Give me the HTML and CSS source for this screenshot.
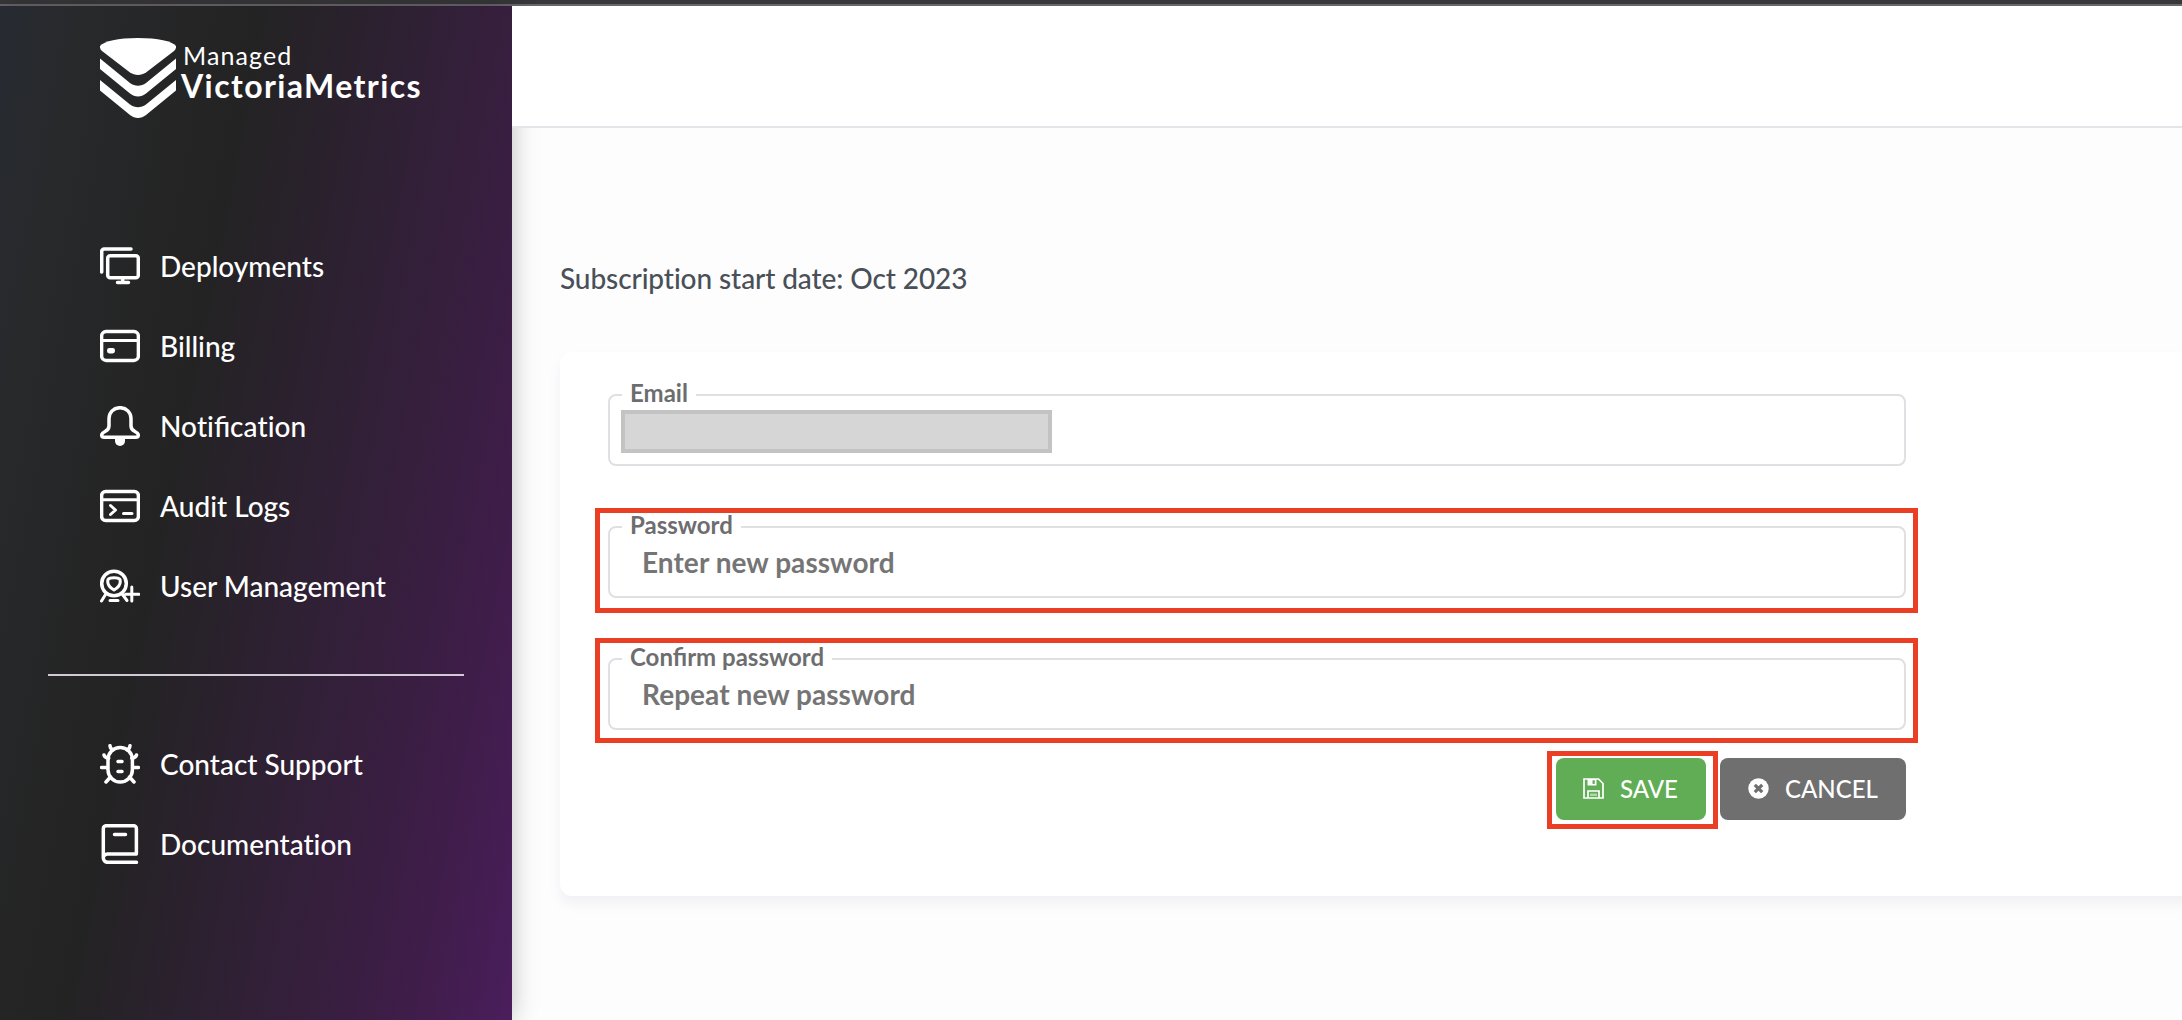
FILE: index.html
```html
<!DOCTYPE html>
<html lang="en">
<head>
<meta charset="utf-8">
<title>Managed VictoriaMetrics</title>
<link rel="stylesheet" href="styles.css">
</head>
<body>
<div class="window-edge"></div>
<div class="app">
  <aside class="sidebar">
    <div class="brand">
      <svg class="brand-mark" viewBox="0 0 76 80" fill="#fff">
        <path d="M0 8C4 3 18 0 38 0s34 3 38 8c.4 2-.5 3.500-2 5L46 34.500c-5 3.300-11 3.300-16 0L2 13C.5 11.500-.4 10 0 8z"/>
        <path d="M0 20.500L30 45c5 3.500 11 3.500 16 0l30-24.500V31L46 55.500c-5 4-11 4-16 0L0 31z"/>
        <path d="M0 42l30 24.500c5 3.500 11 3.500 16 0L76 42v10.500L46 77c-5 4-11 4-16 0L0 52.500z"/>
      </svg>
      <div class="brand-text">
        <span class="brand-top">Managed</span>
        <span class="brand-name">VictoriaMetrics</span>
      </div>
    </div>
    <nav class="nav nav-main">
      <a class="nav-item"><svg class="icon" viewBox="0 0 40 40"><path d="M1.700 26V5.500a2.500 2.500 0 0 1 2.500-2.500H31"/><rect x="7.700" y="9.800" width="30.600" height="22" rx="2.500"/><path d="M22.700 32v4.500M17.500 36.500h11"/></svg><span>Deployments</span></a>
      <a class="nav-item"><svg class="icon" viewBox="0 0 40 40"><rect x="1.600" y="5.600" width="36.800" height="28.800" rx="4.500"/><path class="thin" d="M2 14.500h36"/><rect class="solid" x="7" y="22" width="8" height="5.400" rx="2.400"/></svg><span>Billing</span></a>
      <a class="nav-item"><svg class="icon" viewBox="0 0 40 40"><path d="M20 1.700c-6.500 0-11 4.800-11 11v7c0 3-1 4.300-3.500 5.500C3 26.500 1.700 27.500 1.700 29c0 1.500 1 2.300 2.500 2.300h31.600c1.500 0 2.500-.8 2.500-2.300 0-1.500-1.300-2.500-3.800-3.800C32 24 31 22.700 31 19.700v-7c0-6.200-4.500-11-11-11z"/><path class="solid" d="M15 32h10v3a5 5 0 0 1-10 0z"/></svg><span>No<span class="plain">t</span>ifica<span class="plain">t</span>ion</span></a>
      <a class="nav-item"><svg class="icon" viewBox="0 0 40 40"><rect x="1.600" y="5.600" width="36.800" height="28.800" rx="4"/><path class="thin" d="M2 13.800h36M10.500 19.500l5 4.500-5 4.500M23.500 27.500H32"/></svg><span>Audit Logs</span></a>
      <a class="nav-item"><svg class="icon" viewBox="0 0 40 40"><circle cx="14" cy="17.500" r="12.300"/><path class="thin" d="M8 13.500c2-2.500 10-2.500 12 0 1 4-1.500 8-6 10.500C9.500 21.500 7 17.500 8 13.500zM5.500 28.500L1.500 35M22.500 28.500l4.500 6M10 34.500h8M25.500 28.300h13.500M31.800 21v14"/></svg><span>User Management</span></a>
    </nav>
    <hr class="divider">
    <nav class="nav">
      <a class="nav-item"><svg class="icon" viewBox="0 0 40 40"><rect x="8" y="3.400" width="24.400" height="34.600" rx="12.200"/><path d="M10 1.700c.2 2.500 1 3.500 3 4M30 1.700c-.2 2.500-1 3.500-3 4M4 11c.5 2 2 2.800 4.700 3M36.500 11c-.5 2-2 2.800-4.700 3M1.500 23.500H7M33 23.500h5.500M6 38l4.500-5M34 38l-4.500-5M18 17.600h4M18 27.600h4"/></svg><span>Contact Support</span></a>
      <a class="nav-item"><svg class="icon" viewBox="0 0 40 40"><path d="M36.500 38.300H7.500a4.200 4.200 0 0 1-4.200-4.200V4.700a3 3 0 0 1 3-3h27.400a2.700 2.700 0 0 1 2.700 2.700V30H7.500a4.100 4.100 0 0 0-4.200 4.100M14.500 10.500h11"/></svg><span class="plain">Documentation</span></a>
    </nav>
  </aside>
  <main class="main">
    <header class="topbar"></header>
    <section class="content">
      <p class="subscription plain">Subscription start date: Oct 2023</p>
      <form class="card">
        <fieldset class="field">
          <legend>Email</legend>
          <span class="redacted"></span>
        </fieldset>
        <div class="field-wrap">
          <fieldset class="field">
            <legend>Password</legend>
            <input type="password" placeholder="Enter new password">
          </fieldset>
          <span class="highlight highlight-password"></span>
        </div>
        <div class="field-wrap">
          <fieldset class="field">
            <legend>Confirm password</legend>
            <input type="password" placeholder="Repeat new password">
          </fieldset>
          <span class="highlight highlight-confirm"></span>
        </div>
        <div class="actions">
          <div class="save-wrap">
            <button class="btn btn-save" type="button"><svg class="btn-icon" viewBox="0 0 21 21"><path d="M1 1h14.500L20 5.500V20H1z" fill="none" stroke="#fff" stroke-width="1.700"/><path d="M4.500 1h9v6.500h-9z" fill="#fff"/><path d="M9.500 2.300h2.300v3.600H9.500z" fill="#61ad55"/><path d="M5 20v-7h11v7" fill="none" stroke="#fff" stroke-width="1.700"/><path d="M7 16.800h7" stroke="#fff" stroke-opacity=".5" stroke-width="2.500"/></svg>SAVE</button>
            <span class="highlight highlight-save"></span>
          </div>
          <button class="btn btn-cancel" type="button"><svg class="btn-icon" viewBox="0 0 21 21"><circle cx="10.500" cy="10.500" r="10.200" fill="#fff"/><path d="M6.800 6.800l7.400 7.400M14.200 6.800l-7.400 7.400" stroke="#706f70" stroke-width="3.200"/></svg>CANCEL</button>
        </div>
      </form>
    </section>
  </main>
</div>
</body>
</html>
```
FILE: styles.css
```css
* { box-sizing: border-box; }
body {
  margin: 0;
  height: 1020px;
  overflow: hidden;
  display: flex;
  flex-direction: column;
  font-family: Lato, "Liberation Sans", sans-serif;
  background: #fdfdfe;
}
.plain { font-variant-ligatures: none; }
.window-edge { height: 6px; flex: none; background: #38383a; border-bottom: 2px solid #69676b; }
.app { flex: 1; display: flex; min-height: 0; }

.sidebar {
  position: relative;
  z-index: 1;
  width: 512px;
  flex: none;
  color: #fff;
  background: linear-gradient(101deg, #272b32 0%, #28292b 12%, #232323 36%, #2c2130 54%, #391e41 76%, #401d4b 87%, #4a1e5c 100%);
  box-shadow: 0 0 24px rgba(0, 0, 0, .25);
}
.brand { display: flex; align-items: flex-start; padding: 32px 0 0 100px; height: 220px; }
.brand-mark { width: 76px; height: 80px; flex: none; }
.brand-text { display: flex; flex-direction: column; padding: 3px 0 0 6px; }
.brand-top { font-size: 25px; line-height: 28px; padding-left: 1px; letter-spacing: 1.100px; }
.brand-name { font-size: 32px; line-height: 34px; font-weight: 700; letter-spacing: 1.400px; margin-left: -1px; }
.nav { padding-left: 100px; }
.nav-main { height: 448px; }
.nav-item { display: flex; align-items: center; gap: 20px; height: 80px; font-size: 28px; font-weight: 500; }
.icon { width: 40px; height: 40px; fill: none; stroke: #fff; stroke-width: 3.500; stroke-linecap: round; stroke-linejoin: round; }
.icon .thin { stroke-width: 3; }
.icon .solid { fill: #fff; stroke: none; }
.divider { margin: 0 48px 48px; border: 0; height: 2px; background: #d2c9d6; }

.main { flex: 1; min-width: 0; display: flex; flex-direction: column; }
.topbar { position: relative; z-index: 2; height: 122px; background: #fff; border-bottom: 2px solid #e6e4e8; }
.content { padding: 132px 0 0 48px; }
.subscription { margin: 0; height: 92px; font-size: 28px; line-height: 36px; color: #495057; font-weight: 500; letter-spacing: -.09px; }
.card {
  width: 1700px;
  height: 544px;
  padding: 42px 0 0 48px;
  border-radius: 12px;
  background: #fff;
  box-shadow: 0 8px 12px rgba(120, 120, 150, .09);
}
.field {
  width: 1298px;
  height: 72px;
  margin: 0 0 60px;
  padding: 0;
  min-width: 0;
  border: 2px solid #dee0e3;
  border-radius: 8px;
}
.field legend {
  height: 2px;
  margin-left: 12px;
  padding: 0 8px;
  font-size: 24px;
  line-height: 0;
  font-weight: 700;
  color: #6d6d6f;
  transform: translateY(-1px);
}
.field input {
  display: block;
  width: 100%;
  height: 68px;
  border: 0;
  padding: 0 0 0 32px;
  background: transparent;
  font: 700 28px Lato, sans-serif;
  letter-spacing: .06px;
  color: #757575;
}
.field input::placeholder { color: #757575; opacity: 1; }
.redacted { display: block; width: 431px; height: 43px; margin: 14px 0 0 11px; background: #d6d6d6; border: 4px solid #c3c3c3; }
.field-wrap, .save-wrap { position: relative; }
.highlight { position: absolute; border: 5px solid #ea3f25; pointer-events: none; }
.highlight-password { left: -13px; top: -18px; width: 1323px; height: 105px; }
.highlight-confirm { left: -13px; top: -20px; width: 1323px; height: 105px; }
.highlight-save { left: -9px; top: -7px; width: 171px; height: 78px; }
.actions { display: flex; gap: 14px; width: 1298px; justify-content: flex-end; margin-top: -32px; }
.btn {
  display: flex;
  align-items: center;
  gap: 16px;
  height: 62px;
  padding: 0 0 1px 27px;
  border: 0;
  border-radius: 8px;
  font: 500 24px Lato, sans-serif;
  color: #fff;
}
.btn-icon { width: 21px; height: 21px; }
.btn-save { width: 150px; background: #61ad55; }
.btn-cancel { width: 186px; padding-left: 28px; background: #706f70; }
```
